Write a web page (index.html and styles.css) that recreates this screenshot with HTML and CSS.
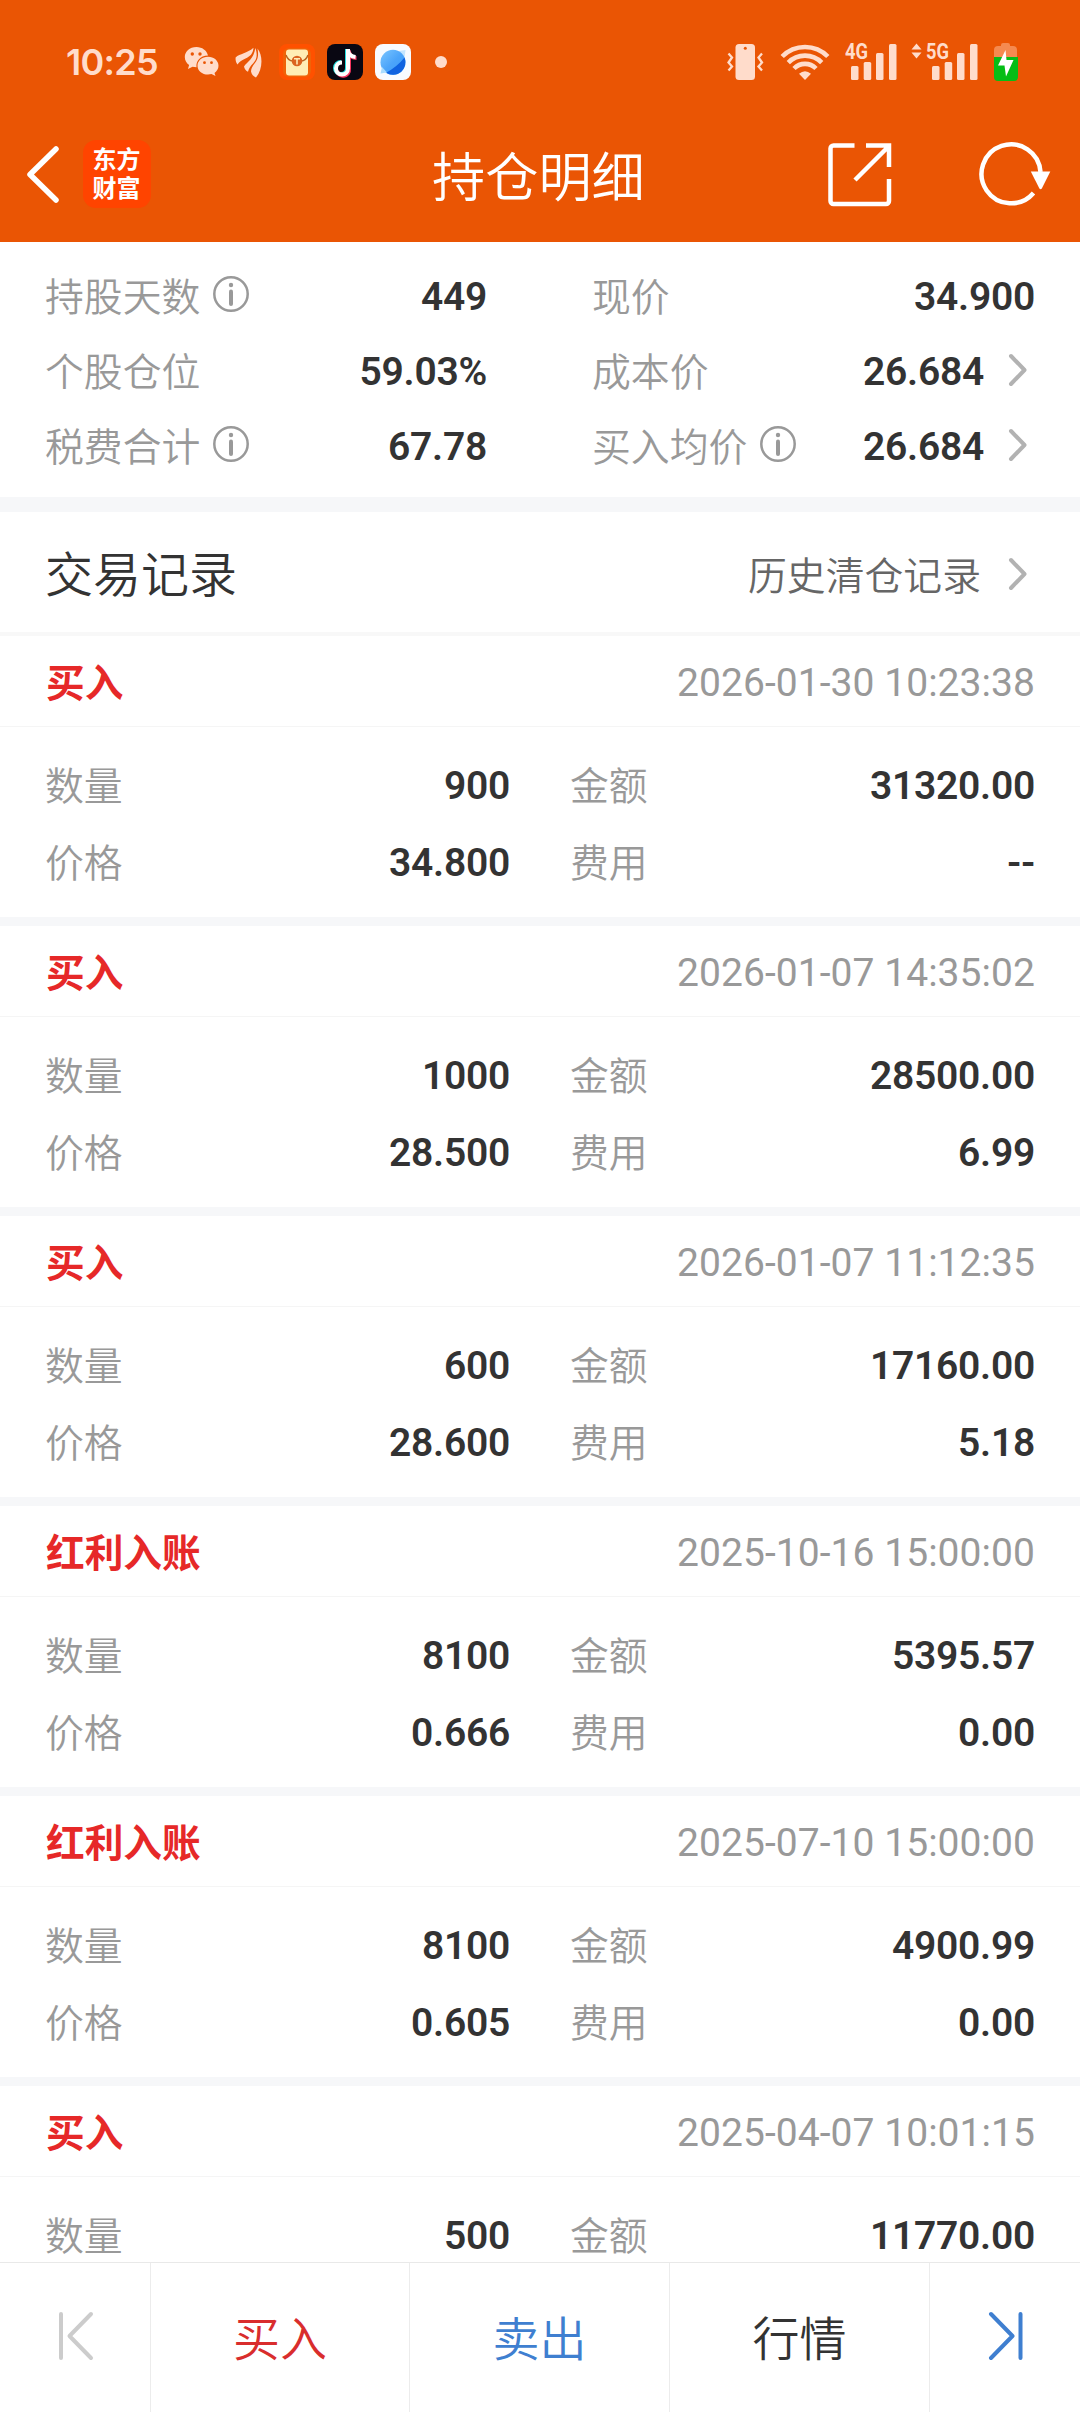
FILE: index.html
```html
<!DOCTYPE html>
<html lang="zh-CN">
<head>
<meta charset="utf-8">
<title>持仓明细</title>
<link rel="stylesheet" href="styles.css">
</head>
<body>
<svg class="defs" aria-hidden="true">
  <symbol id="info" viewBox="0 0 36 36"><circle cx="18" cy="18" r="16.700" fill="none" stroke="#999" stroke-width="2.500"/><circle cx="18" cy="9" r="2.200" fill="#999"/><path d="M18 15.500V28" stroke="#999" stroke-width="4" stroke-linecap="round"/></symbol>
  <symbol id="next" viewBox="0 0 20 34"><path d="M3 3L16.500 17L3 31" fill="none" stroke="#b2b2b2" stroke-width="4" stroke-linecap="round" stroke-linejoin="round"/></symbol>
  <symbol id="bars" viewBox="0 0 46 38"><g fill="#ffdccb"><rect x="0" y="23" width="7.500" height="14" rx="1.500"/><rect x="12.700" y="19" width="7.500" height="18" rx="1.500"/><rect x="25" y="10" width="7.500" height="27" rx="1.500"/><rect x="38" y="1" width="7.500" height="36" rx="1.500"/></g></symbol>
</svg>
<div class="screen">
  <header class="top">
    <div class="status">
      <span class="clock">10:25</span>
      <svg class="wechat" width="36" height="32" viewBox="0 0 36 32"><path fill="#ffdccb" d="M12.500 1C5.500 1 .8 5.600.8 11c0 3.400 1.700 6 4.300 8L4 23l4.500-2.300c1.200.3 2.500.5 4 .5C11.700 15.500 16 9.500 24 9.500 22.800 4.500 18.200 1 12.500 1z"/><path fill="#ffdccb" d="M24 10.800c-6 0-10.500 4-10.500 8.900S18 28.600 24 28.600c1.200 0 2.400-.2 3.500-.5l4 2-1-3.200c2.400-1.700 4-4.200 4-7.200 0-4.900-4.500-8.900-10.500-8.900z"/><g fill="#ea5504"><circle cx="8.300" cy="8" r="1.700"/><circle cx="16" cy="8" r="1.700"/><circle cx="20.500" cy="16.700" r="1.400"/><circle cx="27.500" cy="16.700" r="1.400"/></g></svg>
      <svg class="wing" width="28" height="31" viewBox="0 0 28 31"><g fill="#ffdccb"><path d="M.6 10.500C5 6.500 12 6.500 18.500.8 18 7 15 9.500 10.500 11.500 7 13.200 4.500 14.500 2.500 17.500 1 15.500.3 13 .6 10.500z"/><path d="M9 19.500C12 15 18.800 12 20.300 1c2.700 7 1.200 12-2.300 15.500-2.500 2.500-4 4.500-5 8.200-2-.8-3.500-2.700-4-5.200z"/><path d="M16 24.500C16.500 19.500 18.500 18.500 21 14.500 23.300 10.800 23.500 7 22.500 1.500c5.500 7 5.500 20.500-1.500 29C18.500 29.500 16.500 27.500 16 24.500z"/></g></svg>
      <svg class="app" width="36" height="36" viewBox="0 0 36 36"><rect width="36" height="36" rx="8" fill="#ff5100"/><rect x="4" y="4" width="28" height="29" rx="6" fill="#f06308"/><rect x="7" y="5.500" width="22" height="26" rx="3" fill="#ffedb5"/><path d="M7 11Q9 17 14 17M29 11Q27 17 22 17" fill="none" stroke="#b96421" stroke-width="1.500"/><circle cx="18" cy="17" r="5.300" fill="#db6421"/><path d="M15 14.800h6M18 14.800V20.500" stroke="#ffe9b5" stroke-width="1.600"/></svg>
      <svg class="app" width="36" height="36" viewBox="0 0 36 36"><rect width="36" height="36" rx="8" fill="#090712"/><g fill="none" stroke-width="4"><path stroke="#25dfe1" d="M20 5V24a6 6 0 1 1-6-6M20 6c0 4 3 6.500 7 7"/><path stroke="#f5345e" d="M22 6.500V25a6 6 0 0 1-12 1.500M22 8c1 4 4 6 7.500 6"/><path stroke="#fff" d="M21 5V24.500a6 6 0 1 1-6-6M21 5.500c0 5 3.500 7 7.500 7.500"/></g></svg>
      <svg class="app" width="36" height="36" viewBox="0 0 36 36"><defs><linearGradient id="planet" x1="0" y1="0" x2="1" y2="1"><stop offset="0" stop-color="#7cc6ff"/><stop offset=".5" stop-color="#4ba4fa"/><stop offset="1" stop-color="#3d9bf8"/></linearGradient></defs><rect width="36" height="36" rx="8" fill="#f8fbff"/><path d="M24 7l6.500-1-1 8z" fill="#c4e6ff"/><circle cx="18" cy="18.300" r="12.500" fill="url(#planet)"/><path d="M11 28.700Q22 23 29.500 13.500A12.500 12.500 0 0 1 11 28.700z" fill="#0f62e0"/><path d="M5.500 29.500L7 23 12 28.500z" fill="#a9dcff"/></svg>
      <span class="dot"></span>
      <svg class="vibrate" width="37" height="38" viewBox="0 0 37 38"><rect x="8.500" y="1" width="19.500" height="36" rx="3.500" fill="#ffdccb"/><circle cx="18.300" cy="5.300" r="1.500" fill="#ea5504"/><path d="M1.500 10.500l3.500 4-3.500 5 3.500 4-3.500 4M35 10.500l-3.500 4 3.500 5-3.500 4 3.500 4" fill="none" stroke="#ffdccb" stroke-width="2.300"/></svg>
      <svg class="wifi" width="50" height="38" viewBox="0 0 50 38"><g fill="none" stroke="#ffdccb" stroke-width="4.600"><path d="M2.200 13.500a32 32 0 0 1 45.600 0"/><path d="M8.300 19.600a23.500 23.500 0 0 1 33.400 0"/><path d="M14 25.500a15.500 15.500 0 0 1 22 0"/></g><path d="M25 37l-6-6.200q6-5 12 0z" fill="#ffdccb"/></svg>
      <svg class="sig4" width="54" height="48" viewBox="0 -5 54 48"><text class="net" x="0" y="16" textLength="23" lengthAdjust="spacingAndGlyphs">4G</text><use href="#bars" x="6" width="46" height="38"/></svg>
      <svg class="sig5" width="68" height="48" viewBox="0 -5 68 48"><path d="M5.500.5l5 6h-10zM5.500 15.500l5-6h-10z" fill="#ffdccb"/><text class="net" x="15" y="16" textLength="23" lengthAdjust="spacingAndGlyphs">5G</text><use href="#bars" x="21" width="46" height="38"/></svg>
      <svg class="battery" width="26" height="40" viewBox="0 0 26 40"><path d="M8 4V3a2 2 0 0 1 2-2h5a2 2 0 0 1 2 2v1h3a4 4 0 0 1 4 4v8H1V8a4 4 0 0 1 4-4z" fill="#f58a50"/><path d="M1 15h24v20a4 4 0 0 1-4 4H5a4 4 0 0 1-4-4z" fill="#05bd16"/><path d="M12.500 8L5 23.500h6.500L13 34.500 20.500 18h-7z" fill="#fff"/></svg>
    </div>
    <nav class="nav">
      <svg class="back" width="36" height="60" viewBox="0 0 36 60"><path d="M32 5L6 30.500L32 56" fill="none" stroke="#fff" stroke-width="5.500" stroke-linejoin="round" stroke-linecap="round"/></svg>
      <div class="logo">东方<br>财富</div>
      <h1 class="title">持仓明细</h1>
      <svg class="share" width="64" height="64" viewBox="0 0 64 64"><g fill="none" stroke="#fff" stroke-width="4.500"><path d="M26.500 2.500H5.500a3 3 0 0 0-3 3V58a3 3 0 0 0 3 3H58a3 3 0 0 0 3-3V36"/><path d="M38 2.500H61V24M60 4L27 37"/></g></svg>
      <svg class="refresh" width="74" height="66" viewBox="0 0 74 66"><path d="M54.500 52A29.500 29.500 0 1 1 61.500 31" fill="none" stroke="#fff" stroke-width="4.500"/><path d="M51.800 30.500h19.500L62.800 47.500q-1.200 1.500-2.400 0z" fill="#fff"/></svg>
    </nav>
  </header>
  <main class="content">
    <section class="summary">
      <div class="pair"><span class="label">持股天数</span><svg class="info"><use href="#info"/></svg><b class="num">449</b></div>
      <div class="pair"><span class="label">现价</span><b class="num">34.900</b></div>
      <div class="pair"><span class="label">个股仓位</span><b class="num">59.03%</b></div>
      <div class="pair"><span class="label">成本价</span><b class="num">26.684</b><svg class="next"><use href="#next"/></svg></div>
      <div class="pair"><span class="label">税费合计</span><svg class="info"><use href="#info"/></svg><b class="num">67.78</b></div>
      <div class="pair"><span class="label">买入均价</span><svg class="info"><use href="#info"/></svg><b class="num">26.684</b><svg class="next"><use href="#next"/></svg></div>
    </section>
    <div class="section-head"><h2 class="section-title">交易记录</h2><span class="link">历史清仓记录</span><svg class="next"><use href="#next"/></svg></div>
    <article class="record">
      <div class="record-head"><span class="kind">买入</span><time class="time">2026-01-30 10:23:38</time></div>
      <div class="record-body">
        <span class="label">数量</span><b class="num">900</b><span class="label">金额</span><b class="num">31320.00</b>
        <span class="label">价格</span><b class="num">34.800</b><span class="label">费用</span><b class="num">--</b>
      </div>
    </article>
    <article class="record">
      <div class="record-head"><span class="kind">买入</span><time class="time">2026-01-07 14:35:02</time></div>
      <div class="record-body">
        <span class="label">数量</span><b class="num">1000</b><span class="label">金额</span><b class="num">28500.00</b>
        <span class="label">价格</span><b class="num">28.500</b><span class="label">费用</span><b class="num">6.99</b>
      </div>
    </article>
    <article class="record">
      <div class="record-head"><span class="kind">买入</span><time class="time">2026-01-07 11:12:35</time></div>
      <div class="record-body">
        <span class="label">数量</span><b class="num">600</b><span class="label">金额</span><b class="num">17160.00</b>
        <span class="label">价格</span><b class="num">28.600</b><span class="label">费用</span><b class="num">5.18</b>
      </div>
    </article>
    <article class="record">
      <div class="record-head"><span class="kind">红利入账</span><time class="time">2025-10-16 15:00:00</time></div>
      <div class="record-body">
        <span class="label">数量</span><b class="num">8100</b><span class="label">金额</span><b class="num">5395.57</b>
        <span class="label">价格</span><b class="num">0.666</b><span class="label">费用</span><b class="num">0.00</b>
      </div>
    </article>
    <article class="record">
      <div class="record-head"><span class="kind">红利入账</span><time class="time">2025-07-10 15:00:00</time></div>
      <div class="record-body">
        <span class="label">数量</span><b class="num">8100</b><span class="label">金额</span><b class="num">4900.99</b>
        <span class="label">价格</span><b class="num">0.605</b><span class="label">费用</span><b class="num">0.00</b>
      </div>
    </article>
    <article class="record">
      <div class="record-head"><span class="kind">买入</span><time class="time">2025-04-07 10:01:15</time></div>
      <div class="record-body">
        <span class="label">数量</span><b class="num">500</b><span class="label">金额</span><b class="num">11770.00</b>
      </div>
    </article>
  </main>
  <footer class="actions">
    <div class="action"><svg width="38" height="52" viewBox="0 0 38 52"><path d="M5 4V48M35 4L13.500 26L35 48" fill="none" stroke="#ccc" stroke-width="4" stroke-linecap="round" stroke-linejoin="round"/></svg></div>
    <div class="action buy">买入</div>
    <div class="action sell">卖出</div>
    <div class="action">行情</div>
    <div class="action"><svg width="38" height="52" viewBox="0 0 38 52"><path d="M34.500 4V48M5 4L26.500 26L5 48" fill="none" stroke="#3f7fd0" stroke-width="4" stroke-linecap="round" stroke-linejoin="round"/></svg></div>
  </footer>
</div>
</body>
</html>
```
FILE: styles.css
```css
* { box-sizing: border-box; }
body {
  margin: 0;
  background: #fff;
  color: #333;
  font-family: Roboto, "Noto Sans CJK SC", sans-serif;
  font-size: 39px;
}
svg { display: block; flex: none; }
.defs { position: absolute; width: 0; height: 0; }
.screen {
  width: 1080px;
  height: 2412px;
  overflow: hidden;
  display: flex;
  flex-direction: column;
}

/* orange header */
.top { flex: none; height: 242px; background: #ea5504; }
.status {
  height: 106px;
  padding: 18px 0 0 66px;
  display: flex;
  align-items: center;
}
.clock {
  width: 92px;
  font: 600 36px/40px Inter, sans-serif;
  letter-spacing: -0.7px;
  color: #ffdccb;
  white-space: nowrap;
}
.wechat { margin-left: 26px; }
.wing { margin-left: 15px; }
.app { margin-left: 12px; }
.wing + .app { margin-left: 16px; }
.dot { width: 12px; height: 12px; margin-left: 24px; border-radius: 50%; background: #ffdccb; }
.vibrate { margin-left: 280px; }
.wifi { margin-left: 16px; }
.sig4 { margin-left: 15px; }
.sig5 { margin-left: 12px; }
.battery { margin-left: 14px; }
.net { font: 700 22px Roboto, sans-serif; fill: #ffdccb; }
.nav {
  height: 136px;
  padding-top: 30px;
  display: grid;
  grid-template-columns: 83px 68px 677px 151px 101px;
  align-items: start;
}
.back { margin: 8px 0 0 24px; }
.logo {
  width: 68px;
  height: 68px;
  margin-top: 4px;
  padding: 3px 1px 0 0;
  border-radius: 13px;
  background: #ff4400;
  color: #fff;
  text-align: center;
  font: 700 24px/29px "Noto Sans CJK SC", sans-serif;
}
.title {
  margin: 0;
  padding-left: 281px;
  font: 350 53.200px/76px "Noto Sans CJK SC", sans-serif;
  color: #fff;
}
.share { margin-top: 7px; }
.refresh { margin-top: 5px; }

/* holding summary */
.content { flex: 1; min-height: 0; overflow: hidden; }
.label {
  font: 350 38.850px/56px "Noto Sans CJK SC", sans-serif;
  color: #999;
  padding-bottom: 6px;
  white-space: nowrap;
}
.num {
  margin-left: auto;
  font-weight: 600;
  line-height: 56px;
  letter-spacing: -0.25px;
  text-align: right;
}
.info { width: 36px; height: 36px; margin: -5px 0 0 12.600px; }
.next { width: 20px; height: 34px; margin: -4px 7px 0 24px; }
.summary {
  height: 255px;
  padding: 17px 45px 13px;
  display: grid;
  grid-template-columns: 442px 443px;
  column-gap: 105px;
  grid-auto-rows: 75px;
}
.pair { display: flex; align-items: center; }

.section-head {
  height: 139px;
  padding: 0 45px;
  border-top: 15px solid #f6f7f9;
  border-bottom: 4px solid #f8f8f8;
  display: flex;
  align-items: center;
}
.section-title {
  margin: 0;
  padding-bottom: 3px;
  font: 350 48px/70px "Noto Sans CJK SC", sans-serif;
}
.link {
  margin-left: auto;
  padding-top: 2px;
  font: 350 38.850px/56px "Noto Sans CJK SC", sans-serif;
  color: #666;
}
.section-head .next { margin: 3px 7px 0 27px; }

/* trade records */
.record { height: 290px; border-bottom: 9px solid #f6f7f9; }
.record-head {
  height: 91px;
  padding: 1px 45px 0;
  border-bottom: 1px solid #f5f5f5;
  display: flex;
  align-items: center;
  justify-content: space-between;
}
.kind {
  padding: 0 0 4px 1px;
  font: 700 38.700px/56px "Noto Sans CJK SC", sans-serif;
  color: #e62828;
}
.time { padding-top: 2px; color: #999; line-height: 56px; letter-spacing: 0.05px; }
.record-body {
  padding: 20px 45px 0;
  display: grid;
  grid-template-columns: 100px 365px 60px 100px 365px;
  grid-auto-rows: 77px;
  align-items: center;
}
.record-body .label:nth-child(4n + 3) { grid-column: 4; }

/* bottom actions */
.actions {
  flex: none;
  height: 150px;
  border-top: 1px solid #e9e9e9;
  display: grid;
  grid-template-columns: 151px 259px 260px 260px 150px;
  font: 350 47px/70px "Noto Sans CJK SC", sans-serif;
}
.action {
  padding-bottom: 3px;
  border-right: 1px solid #ececec;
  display: flex;
  align-items: center;
  justify-content: center;
}
.action:last-child { border-right: 0; }
.buy { color: #d92d2d; }
.sell { color: #3f7fd0; }
```
